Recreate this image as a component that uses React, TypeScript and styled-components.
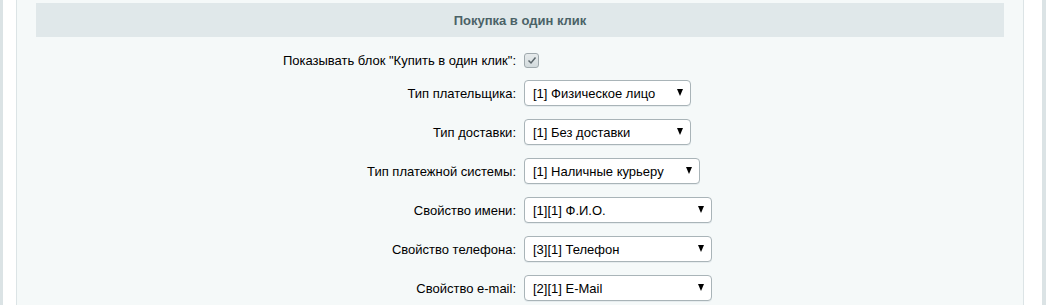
import styled, { createGlobalStyle } from 'styled-components'

const GlobalStyle = createGlobalStyle`
  html, body {
    margin: 0;
    padding: 0;
    background: #fff;
  }
  body {
    font-family: "Liberation Sans", Arial, sans-serif;
    font-size: 13px;
    color: #000;
  }
`

const Page = styled.div`
  display: flex;
  height: 305px;
  overflow: hidden;
`

const Strip = styled.div<{ $w: number }>`
  width: ${p => p.$w}px;
  flex: none;
  background: #dbe3e5;
`

const Gutter = styled.div<{ $w: number }>`
  width: ${p => p.$w}px;
  flex: none;
  background: #fff;
`

const Panel = styled.div`
  flex: 1;
  background: #f5f9f9;
  border-left: 1px solid #dce4e6;
  border-right: 1px solid #dce4e6;
  padding: 3px 19px 0;
`

const Heading = styled.div`
  height: 34px;
  background: #e0e8ea;
  display: flex;
  align-items: center;
  justify-content: center;
  font-weight: bold;
  font-size: 13px;
  color: #4b6267;
`

const Form = styled.div`
  display: flex;
  flex-direction: column;
  gap: 13px;
  padding-top: 16px;
`

const Row = styled.div<{ $h: number }>`
  display: grid;
  grid-template-columns: 1fr 1fr;
  height: ${p => p.$h}px;
  align-items: center;
`

const Label = styled.div`
  text-align: right;
  padding-right: 4px;
  white-space: nowrap;
`

const Control = styled.div`
  padding-left: 4px;
  display: flex;
  align-items: center;
`

const Check = styled.div`
  width: 13px;
  height: 13px;
  border: 1px solid #9fa9ad;
  border-radius: 3px;
  background: linear-gradient(#e6ebec, #d3dbdd);
  display: flex;
  align-items: center;
  justify-content: center;
`

const Select = styled.div<{ $w: number }>`
  width: ${p => p.$w}px;
  height: 26px;
  box-sizing: border-box;
  border: 1px solid #a9b4b8;
  border-radius: 4px;
  background: #fff;
  box-shadow: 0 1px 0 #e6ecee;
  display: flex;
  align-items: center;
  justify-content: space-between;
  padding: 0 7px 0 8px;
`

const Arrow = styled.span`
  width: 0;
  height: 0;
  border-left: 3.5px solid transparent;
  border-right: 3.5px solid transparent;
  border-top: 7px solid #000;
  margin-top: -2px;
`

const rows = [
  { label: 'Тип плательщика:', value: '[1] Физическое лицо', w: 167 },
  { label: 'Тип доставки:', value: '[1] Без доставки', w: 167 },
  { label: 'Тип платежной системы:', value: '[1] Наличные курьеру', w: 176 },
  { label: 'Свойство имени:', value: '[1][1] Ф.И.О.', w: 188 },
  { label: 'Свойство телефона:', value: '[3][1] Телефон', w: 188 },
  { label: 'Свойство e-mail:', value: '[2][1] E-Mail', w: 188 },
]

export default function App() {
  return (
    <Page>
      <GlobalStyle />
      <Strip $w={3} />
      <Gutter $w={13} />
      <Panel>
        <Heading>Покупка в один клик</Heading>
        <Form>
          <Row $h={14}>
            <Label>Показывать блок "Купить в один клик":</Label>
            <Control>
              <Check>
                <svg width="10" height="9" viewBox="0 0 10 9">
                  <path d="M1.5 4.5l2.5 2.5 4.5-5.5" fill="none" stroke="#5c676c" strokeWidth="1.5" />
                </svg>
              </Check>
            </Control>
          </Row>
          {rows.map(r => (
            <Row $h={26} key={r.label}>
              <Label>{r.label}</Label>
              <Control>
                <Select $w={r.w}>
                  <span>{r.value}</span>
                  <Arrow />
                </Select>
              </Control>
            </Row>
          ))}
        </Form>
      </Panel>
      <Gutter $w={18} />
      <Strip $w={4} />
    </Page>
  )
}
